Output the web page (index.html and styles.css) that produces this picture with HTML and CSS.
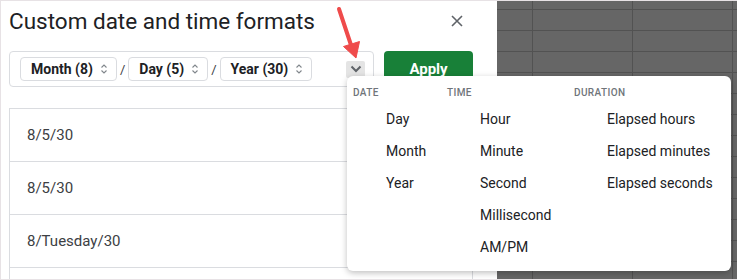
FILE: index.html
```html
<!DOCTYPE html>
<html lang="en">
<head>
    <meta charset="UTF-8">
    <meta name="viewport" content="width=device-width, initial-scale=1.0">
    <title>Custom date and time formats</title>
    <link rel="stylesheet" href="styles.css">
</head>
<body>
    <div class="screen">
        <section class="dialog">
            <header class="dialog-head">
                <h1>Custom date and time formats</h1>
                <button class="close" aria-label="Close">
                    <svg width="12" height="12" viewBox="0 0 12 12"><path d="M1 1 L11 11 M11 1 L1 11" /></svg>
                </button>
            </header>

            <div class="format-row">
                <div class="format-input">
                    <span class="chip">Month (8)
                        <svg class="updown" width="8" height="12" viewBox="0 0 8 12"><path d="M1.5 4.5 L4 2 L6.5 4.5 M1.5 7.5 L4 10 L6.5 7.5" /></svg>
                    </span>
                    <span class="sep">/</span>
                    <span class="chip">Day (5)
                        <svg class="updown" width="8" height="12" viewBox="0 0 8 12"><path d="M1.5 4.5 L4 2 L6.5 4.5 M1.5 7.5 L4 10 L6.5 7.5" /></svg>
                    </span>
                    <span class="sep">/</span>
                    <span class="chip">Year (30)
                        <svg class="updown" width="8" height="12" viewBox="0 0 8 12"><path d="M1.5 4.5 L4 2 L6.5 4.5 M1.5 7.5 L4 10 L6.5 7.5" /></svg>
                    </span>
                    <button class="more" aria-label="More formats">
                        <svg width="12" height="8" viewBox="0 0 12 8"><path d="M1.5 1.5 L6 6 L10.5 1.5" /></svg>
                    </button>
                </div>
                <button class="apply">Apply</button>
            </div>

            <ul class="preview">
                <li>8/5/30</li>
                <li>8/5/30</li>
                <li>8/Tuesday/30</li>
                <li></li>
            </ul>
        </section>

        <div class="sheet"></div>

        <!-- dropdown opened from the chevron -->
        <div class="menu">
            <div class="menu-col">
                <h2>Date</h2>
                <div class="item">Day</div>
                <div class="item">Month</div>
                <div class="item">Year</div>
            </div>
            <div class="menu-col">
                <h2>Time</h2>
                <div class="item">Hour</div>
                <div class="item">Minute</div>
                <div class="item">Second</div>
                <div class="item">Millisecond</div>
                <div class="item">AM/PM</div>
            </div>
            <div class="menu-col">
                <h2>Duration</h2>
                <div class="item">Elapsed hours</div>
                <div class="item">Elapsed minutes</div>
                <div class="item">Elapsed seconds</div>
            </div>
        </div>

        <svg class="arrow" width="737" height="280" viewBox="0 0 737 280">
            <line x1="338" y1="8" x2="350" y2="44" />
            <polygon points="342.5,45.5 358.5,40.5 355,57" />
        </svg>
    </div>
</body>
</html>
```

FILE: styles.css
```css
/* Reset */
* {
    box-sizing: border-box;
    margin: 0;
    padding: 0;
}

body {
    font-family: Roboto, 'Liberation Sans', Arial, sans-serif;
    color: #202124;
    background-color: #fff;
}

button {
    font-family: inherit;
    border: none;
    background: none;
    cursor: pointer;
}

.screen {
    position: relative;
    width: 737px;
    height: 280px;
    display: flex;
    overflow: hidden;
    border-top: 1px solid #e7e2e5;
    border-left: 1px solid #e7e2e5;
    border-bottom: 1px solid #e7e2e5;
}

/* Dialog */
.dialog {
    width: 496px;
    flex-shrink: 0;
    background-color: #fff;
    padding: 0 24px 0 8px;
}

.dialog-head {
    display: flex;
    align-items: center;
    justify-content: space-between;
    padding-top: 6px;
    margin-bottom: 16px;
}

.dialog-head h1 {
    font-size: 22.5px;
    font-weight: 400;
    line-height: 28px;
    color: #202124;
}

.close {
    width: 24px;
    height: 24px;
    margin-right: 4px;
    display: flex;
    align-items: center;
    justify-content: center;
}

.close svg path {
    stroke: #5f6368;
    stroke-width: 1.6;
    fill: none;
}

.format-row {
    display: flex;
    gap: 10px;
    height: 36px;
}

.format-input {
    flex: 1;
    display: flex;
    align-items: center;
    border: 1px solid #dadce0;
    border-radius: 4px;
    padding: 0 8px 0 10px;
}

.chip {
    display: flex;
    align-items: center;
    gap: 7px;
    height: 24px;
    padding: 0 8px 0 10px;
    border: 1px solid #dadce0;
    border-radius: 4px;
    font-size: 14px;
    font-weight: 700;
    color: #202124;
}

.updown path {
    stroke: #80868b;
    stroke-width: 1.1;
    fill: none;
}

.sep {
    margin: 0 3px;
    font-size: 13px;
    color: #3c4043;
}

.more {
    margin-left: auto;
    width: 19px;
    height: 17px;
    border-radius: 2px;
    background-color: #e4e4e4;
    display: flex;
    align-items: center;
    justify-content: center;
}

.more path {
    stroke: #5f6368;
    stroke-width: 2;
    fill: none;
}

.apply {
    width: 89px;
    border-radius: 4px;
    background-color: #188038;
    color: #fff;
    font-size: 15px;
    font-weight: 700;
}

.preview {
    list-style: none;
    margin-top: 21px;
    border: 1px solid #dadce0;
    border-bottom: none;
}

.preview li {
    height: 53px;
    display: flex;
    align-items: center;
    padding-left: 17px;
    border-bottom: 1px solid #dadce0;
    font-size: 15px;
    color: #3c4043;
}

/* Spreadsheet behind the dialog */
.sheet {
    flex: 1;
    background-color: #666;
    background-image:
        linear-gradient(to bottom, #525252 1px, transparent 1px),
        linear-gradient(to right, #525252 1px, transparent 1px);
    background-size: 100% 21px, 100px 100%;
    background-position: 0 8px, 35px 0;
}

/* Dropdown menu */
.menu {
    position: absolute;
    left: 346px;
    top: 75px;
    width: 384px;
    height: 195px;
    background-color: #fff;
    border-radius: 6px;
    box-shadow: 0 2px 6px rgba(0, 0, 0, 0.25);
    display: grid;
    grid-template-columns: 94px 127px 1fr;
    padding: 10px 0 0 6px;
}

.menu h2 {
    font-size: 10px;
    font-weight: 500;
    line-height: 14px;
    letter-spacing: 0.4px;
    text-transform: uppercase;
    color: #70757a;
    margin-bottom: 3px;
}

.menu .item {
    height: 32px;
    line-height: 32px;
    padding-left: 33px;
    font-size: 14px;
    color: #202124;
    white-space: nowrap;
}

/* Red annotation arrow */
.arrow {
    position: absolute;
    left: 0;
    top: 0;
    pointer-events: none;
}

.arrow line {
    stroke: #ef4b4b;
    stroke-width: 4;
    stroke-linecap: round;
}

.arrow polygon {
    fill: #ef4b4b;
    stroke: #ef4b4b;
    stroke-width: 1;
    stroke-linejoin: round;
}
```
